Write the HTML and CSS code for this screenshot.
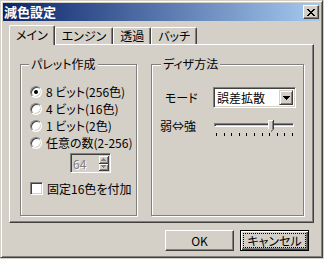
FILE: index.html
```html
<!DOCTYPE html>
<html>
  <head>
    <meta charset="utf-8" />
    <meta name="viewport" content="width=device-width, initial-scale=1" />
    <link rel="stylesheet" href="styles.css">
  </head>
  <body>
    <div class="window">
      <div class="titlebar">
        <span class="title">減色設定</span>
        <span class="close-btn">
          <svg width="8" height="7" viewBox="0 0 8 7">
            <path d="M0 0h2v1H0zM6 0h2v1H6zM1 1h2v1H1zM5 1h2v1H5zM2 2h4v1H2zM3 3h2v1H3zM2 4h4v1H2zM1 5h2v1H1zM5 5h2v1H5zM0 6h2v1H0zM6 6h2v1H6z" fill="#000" />
          </svg>
        </span>
      </div>

      <div class="tabs">
        <div class="tab-strip">
          <span class="tab active">メイン</span>
          <span class="tab">エンジン</span>
          <span class="tab">透過</span>
          <span class="tab">バッチ</span>
        </div>

        <div class="tab-panel">
          <!-- パレット作成 -->
          <fieldset class="group palette">
            <legend>パレット作成</legend>
            <div class="group-body">
              <div class="option"><span class="radio checked"></span>8 ビット(256色)</div>
              <div class="option"><span class="radio"></span>4 ビット(16色)</div>
              <div class="option"><span class="radio"></span>1 ビット(2色)</div>
              <div class="option"><span class="radio"></span>任意の数(2-256)</div>

              <div class="spin">
                <span class="spin-edit">64</span>
                <span class="spin-btns">
                  <span class="spin-btn">
                    <svg width="5" height="3" viewBox="0 0 5 3"><path d="M2 0h1v1h1v1h1v1H0V2h1V1h1z" fill="#808080" /></svg>
                  </span>
                  <span class="spin-btn">
                    <svg width="5" height="3" viewBox="0 0 5 3"><path d="M0 0h5v1H4v1H3v1H2V2H1V1H0z" fill="#808080" /></svg>
                  </span>
                </span>
              </div>

              <div class="option check-row"><span class="checkbox"></span>固定16色を付加</div>
            </div>
          </fieldset>

          <!-- ディザ方法 -->
          <fieldset class="group dither">
            <legend>ディザ方法</legend>
            <div class="group-body">
              <div class="field mode-row">
                <span class="label">モード</span>
                <span class="combo">
                  <span class="combo-text">誤差拡散</span>
                  <span class="combo-btn">
                    <svg width="7" height="4" viewBox="0 0 7 4"><path d="M0 0h7v1H6v1H5v1H4v1H3V3H2V2H1V1H0z" fill="#000" /></svg>
                  </span>
                </span>
              </div>

              <div class="field slider-row">
                <span class="label">弱⇔強</span>
                <span class="slider">
                  <span class="track"></span>
                  <span class="thumb">
                    <svg width="6" height="12" viewBox="0 0 6 12">
                      <path d="M0 0h6v9l-3 3-3-3z" fill="#d4d0c8" />
                      <path d="M0 0h5v1H1v8H0z" fill="#fff" />
                      <path d="M4 1h1v8H4z" fill="#808080" />
                      <path d="M5 0h1v9l-3 3v-1l2-2z" fill="#404040" />
                    </svg>
                  </span>
                  <span class="ticks">
                    <i></i><i></i><i></i><i></i><i></i><i></i><i></i><i></i><i></i><i></i><i></i>
                  </span>
                </span>
              </div>
            </div>
          </fieldset>
        </div>
      </div>

      <div class="buttons">
        <span class="btn">OK</span>
        <span class="btn default"><span class="focus">キャンセル</span></span>
      </div>
    </div>
  </body>
</html>
```

FILE: styles.css
```css
/* Основа: классический серый диалог */
body {
  margin: 0;
  background: #d4d0c8;
  color: #000;
  font-family: "Noto Sans CJK JP", "Noto Sans", sans-serif;
  font-size: 12px;
  font-feature-settings: "palt";
}

.window {
  width: 323px;
  height: 258px;
  box-sizing: border-box;
  padding: 2px;
  border: 1px solid;
  border-color: #d4d0c8 #404040 #404040 #d4d0c8;
  box-shadow: inset 1px 1px #fff, inset -1px -1px #808080;
}

/* Заголовок окна */
.titlebar {
  height: 18px;
  display: flex;
  align-items: center;
  justify-content: space-between;
  padding: 0 1px 0 1px;
  background: linear-gradient(to right, #0a246a, #a6caf0);
}

.title {
  color: #fff;
  font-weight: bold;
  font-size: 13px;
  line-height: 18px;
}

.close-btn {
  width: 16px;
  height: 14px;
  box-sizing: border-box;
  display: flex;
  align-items: center;
  justify-content: center;
  background: #d4d0c8;
  border: 1px solid;
  border-color: #fff #404040 #404040 #fff;
  box-shadow: inset -1px -1px #808080;
}

.close-btn svg {
  display: block;
}

/* Вкладки */
.tabs {
  margin: 4px 0 0 6px;
  width: 305px;
}

.tab-strip {
  display: flex;
  align-items: flex-end;
  height: 19px;
}

.tab {
  height: 17px;
  box-sizing: border-box;
  padding: 0 6px;
  line-height: 15px;
  border: 1px solid;
  border-bottom: 0;
  border-color: #fff #404040 #fff #fff;
  box-shadow: inset -1px 0 #808080;
  border-radius: 2px 2px 0 0;
  background: #d4d0c8;
}

.tab.active {
  position: relative;
  z-index: 1;
  height: 20px;
  margin-bottom: -1px;
  padding-top: 1px;
}

.tab-panel {
  height: 179px;
  box-sizing: border-box;
  display: flex;
  align-items: flex-start;
  gap: 14px;
  padding: 12px 0 0 10px;
  border: 1px solid;
  border-color: #fff #404040 #404040 #fff;
  box-shadow: inset -1px -1px #808080;
}

/* Рамки групп */
.group {
  margin: 0;
  padding: 0;
  height: 159px;
  box-sizing: border-box;
  border: 1px solid #808080;
  box-shadow: 1px 1px #fff, inset 1px 1px #fff;
}

.group legend {
  padding: 0 2px;
  line-height: 14px;
  background: #d4d0c8;
}

.palette {
  width: 117px;
}

.palette legend {
  margin-left: 8px;
}

.palette .group-body {
  padding: 12px 0 0 9px;
}

.dither {
  width: 153px;
}

.dither legend {
  margin-left: 9px;
}

.dither .group-body {
  padding-top: 16px;
}

/* Переключатели и флажок */
.option {
  display: flex;
  align-items: center;
  gap: 4px;
  height: 17px;
  line-height: 17px;
  white-space: nowrap;
}

.radio {
  position: relative;
  width: 12px;
  height: 12px;
  box-sizing: border-box;
  border-radius: 50%;
  border: 1px solid;
  border-color: #808080 #fff #fff #808080;
  box-shadow: inset 1px 1px #404040, inset -1px -1px #d4d0c8;
  background: #fff;
}

.radio.checked::after {
  content: "";
  position: absolute;
  left: 3px;
  top: 3px;
  width: 4px;
  height: 4px;
  border-radius: 50%;
  background: #000;
}

.check-row {
  margin-top: 7px;
}

.checkbox {
  width: 13px;
  height: 13px;
  box-sizing: border-box;
  border: 1px solid;
  border-color: #808080 #fff #fff #808080;
  box-shadow: inset 1px 1px #404040, inset -1px -1px #d4d0c8;
  background: #fff;
}

/* Счётчик (неактивный) */
.spin {
  display: flex;
  width: 41px;
  height: 20px;
  box-sizing: border-box;
  margin: 2px 0 0 40px;
  border: 1px solid;
  border-color: #808080 #fff #fff #808080;
  box-shadow: inset 1px 1px #404040, inset -1px -1px #d4d0c8;
  padding: 2px 1px 1px 2px;
}

.spin-edit {
  flex: 1;
  line-height: 15px;
  color: #808080;
  text-shadow: 1px 1px #fff;
}

.spin-btns {
  display: flex;
  flex-direction: column;
  width: 10px;
}

.spin-btn {
  flex: 1;
  display: flex;
  align-items: center;
  justify-content: center;
  border-right: 1px solid #404040;
  border-bottom: 1px solid #404040;
  box-shadow: inset 1px 1px #fff, inset -1px -1px #808080;
}

.spin-btn svg {
  display: block;
}

/* Поля справа */
.field {
  display: flex;
  white-space: nowrap;
}

.mode-row {
  align-items: center;
  padding-left: 13px;
}

.mode-row .label {
  width: 48px;
}

.combo {
  display: flex;
  align-items: stretch;
  width: 83px;
  height: 21px;
  box-sizing: border-box;
  padding: 2px;
  border: 1px solid;
  border-color: #808080 #fff #fff #808080;
  box-shadow: inset 1px 1px #404040, inset -1px -1px #d4d0c8;
  background: #fff;
}

.combo-text {
  flex: 1;
  padding-left: 1px;
  line-height: 15px;
}

.combo-btn {
  width: 14px;
  box-sizing: border-box;
  display: flex;
  align-items: center;
  justify-content: center;
  background: #d4d0c8;
  border: 1px solid;
  border-color: #d4d0c8 #404040 #404040 #d4d0c8;
  box-shadow: inset 1px 1px #fff, inset -1px -1px #808080;
}

.combo-btn svg {
  display: block;
}

.slider-row {
  align-items: flex-start;
  margin-top: 10px;
  padding-left: 8px;
}

.slider-row .label {
  width: 52px;
  line-height: 16px;
}

.slider {
  position: relative;
  width: 84px;
  height: 20px;
}

.track {
  display: block;
  width: 80px;
  height: 4px;
  box-sizing: border-box;
  margin: 5px 0 0 2px;
  border: 1px solid;
  border-color: #808080 #fff #fff #808080;
  box-shadow: inset 1px 1px #404040, inset -1px -1px #d4d0c8;
}

.thumb {
  position: absolute;
  left: 56px;
  top: 2px;
}

.thumb svg {
  display: block;
}

.ticks {
  display: flex;
  justify-content: space-between;
  width: 77px;
  margin: 6px 0 0 4px;
}

.ticks i {
  width: 1px;
  height: 3px;
  background: #000;
}

/* Кнопки диалога */
.buttons {
  display: flex;
  justify-content: flex-end;
  gap: 6px;
  margin-top: 7px;
  padding-right: 11px;
}

.btn {
  width: 69px;
  height: 21px;
  box-sizing: border-box;
  display: flex;
  align-items: center;
  justify-content: center;
  line-height: 15px;
  border: 1px solid;
  border-color: #fff #404040 #404040 #fff;
  box-shadow: inset -1px -1px #808080;
}

.btn.default {
  padding: 2px;
  border-color: #000;
  box-shadow: inset 1px 1px #fff, inset -1px -1px #404040, inset -2px -2px #808080;
}

.focus {
  flex: 1;
  align-self: stretch;
  display: flex;
  align-items: center;
  justify-content: center;
  border: 1px dotted #000;
}
```
